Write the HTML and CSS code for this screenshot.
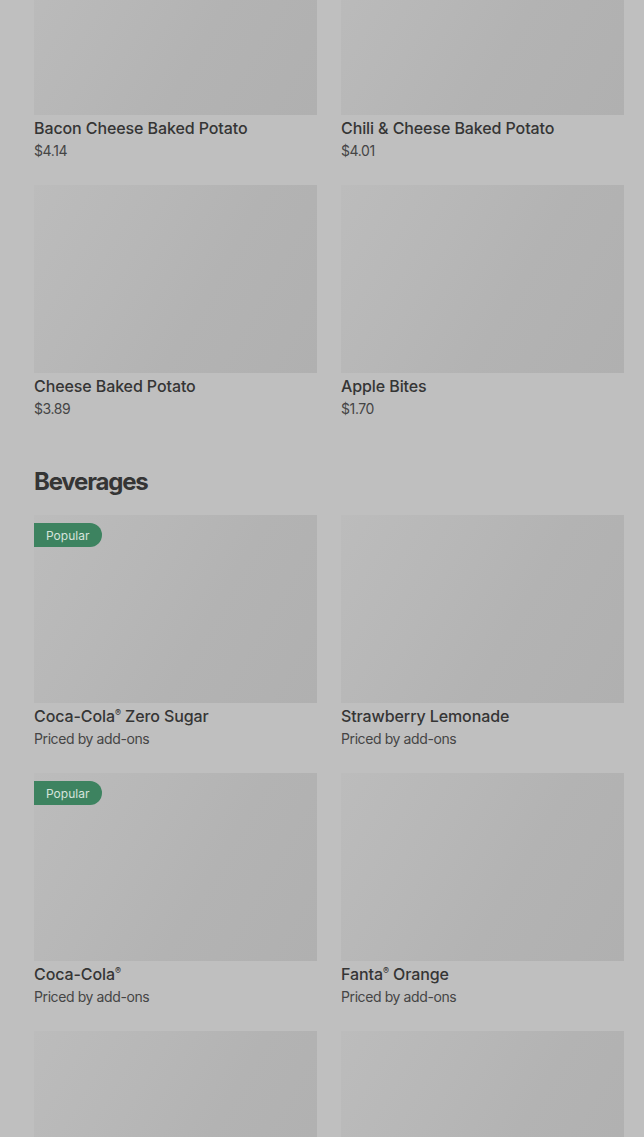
FILE: index.html
```html
<!DOCTYPE html>
<html>
<head>
<meta charset="utf-8">
<link rel="stylesheet" href="styles.css">
</head>
<body>
<main class="page">
  <section class="grid first">
    <article class="card">
      <div class="thumb"></div>
      <h3 class="name">Bacon Cheese Baked Potato</h3>
      <p class="price">$4.14</p>
    </article>
    <article class="card">
      <div class="thumb"></div>
      <h3 class="name">Chili &amp; Cheese Baked Potato</h3>
      <p class="price">$4.01</p>
    </article>
    <article class="card">
      <div class="thumb"></div>
      <h3 class="name">Cheese Baked Potato</h3>
      <p class="price">$3.89</p>
    </article>
    <article class="card">
      <div class="thumb"></div>
      <h3 class="name">Apple Bites</h3>
      <p class="price">$1.70</p>
    </article>
  </section>

  <h2 class="section-title">Beverages</h2>

  <section class="grid">
    <article class="card">
      <div class="thumb"><span class="badge">Popular</span></div>
      <h3 class="name">Coca-Cola<sup>®</sup> Zero Sugar</h3>
      <p class="price">Priced by add-ons</p>
    </article>
    <article class="card">
      <div class="thumb"></div>
      <h3 class="name">Strawberry Lemonade</h3>
      <p class="price">Priced by add-ons</p>
    </article>
    <article class="card">
      <div class="thumb"><span class="badge">Popular</span></div>
      <h3 class="name">Coca-Cola<sup>®</sup></h3>
      <p class="price">Priced by add-ons</p>
    </article>
    <article class="card">
      <div class="thumb"></div>
      <h3 class="name">Fanta<sup>®</sup> Orange</h3>
      <p class="price">Priced by add-ons</p>
    </article>
    <article class="card">
      <div class="thumb"></div>
    </article>
    <article class="card">
      <div class="thumb"></div>
    </article>
  </section>
</main>
</body>
</html>
```

FILE: styles.css
```css
html, body {
  margin: 0;
  padding: 0;
  background: #bfbfbf;
  height: 1137px;
  overflow: hidden;
}
body {
  font-family: Inter, "Noto Sans", sans-serif;
  color: #333;
}
.page {
  padding: 0 20px 0 34px;
  margin-top: -73px;
}
.grid {
  display: grid;
  grid-template-columns: 283px 283px;
  column-gap: 24px;
  row-gap: 24px;
}
.card {
  display: flex;
  flex-direction: column;
}
.thumb {
  position: relative;
  height: 188px;
  background: linear-gradient(120deg, #bcbcbc 0%, #b7b7b7 35%, #b3b3b3 60%, #b0b0b0 100%);
}
.name {
  margin: 2px 0 0;
  font-size: 16px;
  line-height: 22px;
  font-weight: 500;
  color: #353535;
  letter-spacing: -0.1px;
}
.name sup {
  font-size: 9px;
  line-height: 0;
  vertical-align: 6px;
}
.price {
  margin: 2px 0 0;
  font-size: 14px;
  line-height: 20px;
  color: #454545;
  letter-spacing: -0.4px;
}
.section-title {
  margin: 47px 0 17px;
  font-size: 24px;
  line-height: 32px;
  font-weight: 700;
  color: #353535;
  letter-spacing: -1.2px;
}
.badge {
  position: absolute;
  left: 0;
  top: 8px;
  height: 24px;
  padding: 0 13px 0 12px;
  display: flex;
  align-items: center;
  background: #3d8360;
  color: #d6e4dc;
  font-size: 12px;
  border-radius: 0 12px 12px 0;
}
```
